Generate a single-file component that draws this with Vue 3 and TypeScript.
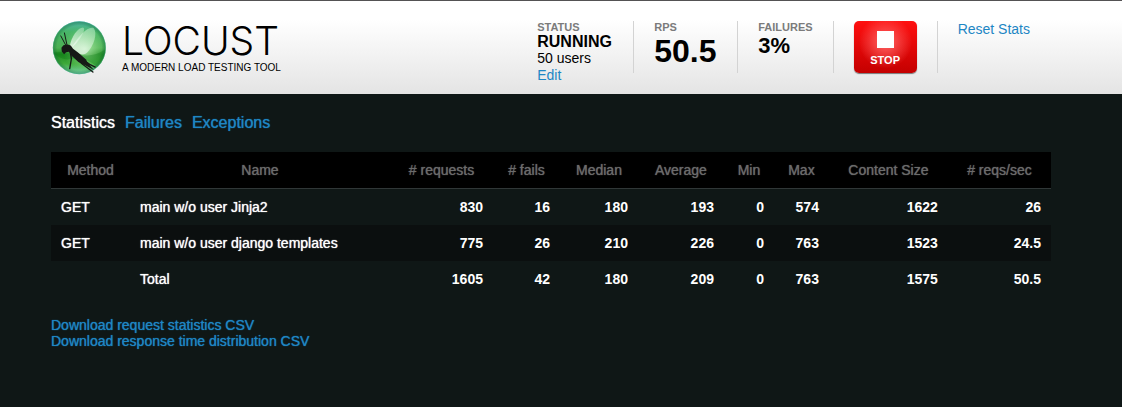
<script setup lang="ts">
interface StatRow {
  method: string
  name: string
  values: (number | string)[]
}

const tabs: string[] = ['Statistics', 'Failures', 'Exceptions']
const columns: string[] = ['Method', 'Name', '# requests', '# fails', 'Median', 'Average', 'Min', 'Max', 'Content Size', '# reqs/sec']
const columnKeys: string[] = ['method', 'name', 'requests', 'fails', 'median', 'average', 'min', 'max', 'size', 'rate']
const rows: StatRow[] = [
  { method: 'GET', name: 'main w/o user Jinja2', values: [830, 16, 180, 193, 0, 574, 1622, 26] },
  { method: 'GET', name: 'main w/o user django templates', values: [775, 26, 210, 226, 0, 763, 1523, 24.5] },
  { method: '', name: 'Total', values: [1605, 42, 180, 209, 0, 763, 1575, 50.5] },
]
const downloads: string[] = ['Download request statistics CSV', 'Download response time distribution CSV']
</script>

<template>
  <div class="page">
    <header class="top">
      <div class="brand">
        <svg class="emblem" viewBox="20 20 163 163" aria-hidden="true">
          <defs>
            <linearGradient id="orb" x1="0" y1="0" x2="0" y2="1">
              <stop offset="0" stop-color="#4db4a5" />
              <stop offset="0.2" stop-color="#48b568" />
              <stop offset="0.5" stop-color="#4cb052" />
              <stop offset="0.62" stop-color="#1f8a22" />
              <stop offset="0.8" stop-color="#3faa3a" />
              <stop offset="1" stop-color="#7ed6b4" />
            </linearGradient>
            <radialGradient id="glow" cx="0.6" cy="0.52" r="0.42">
              <stop offset="0" stop-color="#d8ffd4" stop-opacity="0.75" />
              <stop offset="0.5" stop-color="#a2e69a" stop-opacity="0.45" />
              <stop offset="1" stop-color="#7ad07a" stop-opacity="0" />
            </radialGradient>
            <radialGradient id="edge">
              <stop offset="0.84" stop-color="#0b5a2e" stop-opacity="0" />
              <stop offset="0.96" stop-color="#17713f" stop-opacity="0.4" />
              <stop offset="1" stop-color="#4fb0a0" stop-opacity="0.7" />
            </radialGradient>
            <linearGradient id="wing" x1="0.8" y1="0" x2="0.1" y2="1">
              <stop offset="0" stop-color="#c5efcc" stop-opacity="0.5" />
              <stop offset="1" stop-color="#ffffff" stop-opacity="0.75" />
            </linearGradient>
          </defs>
          <circle cx="101" cy="101" r="80" fill="url(#orb)" />
          <circle cx="101" cy="101" r="80" fill="url(#glow)" />
          <path d="M22 115Q60 111 101 121T180 105Q177 135 154 158Q118 125 65 136Q38 134 22 115Z" fill="#08760f" opacity="0.3" />
          <circle cx="101" cy="101" r="80" fill="url(#edge)" />
          <path d="M72 98C76 67 98 39 113 40C123 45 100 82 77 101Z" fill="url(#wing)" />
          <path d="M76 103C99 63 127 35 144 41C157 55 145 96 124 116C111 127 95 118 76 103Z" fill="url(#wing)" />
          <g fill="none" stroke="#161916" stroke-linecap="round">
            <path d="M61 95L45 65M64 94L56 56" stroke-width="3" />
            <path d="M73 111L77 134L72 164M75 112L77 134" stroke-width="4" />
            <path d="M86 126L108 148L142 174M101 128L132 151L149 159" stroke-width="4" />
          </g>
          <path d="M47 101L53 93L66 91L75 94L82 104L97 115L122 137L124 144L145 168L117 153L98 144L77 124L70 113L61 114L55 120L48 112Z" fill="#161916" />
        </svg>
        <div class="wordmark">
          <h1>LOCUST</h1>
          <p>A MODERN LOAD TESTING TOOL</p>
        </div>
      </div>
      <div class="boxes">
        <div class="box status">
          <div class="label">STATUS</div>
          <div class="state">RUNNING</div>
          <div class="users">50 users</div>
          <a href="#">Edit</a>
        </div>
        <div class="box">
          <div class="label">RPS</div>
          <div class="rps">50.5</div>
        </div>
        <div class="box">
          <div class="label">FAILURES</div>
          <div class="ratio">3%</div>
        </div>
        <div class="box">
          <button class="stop" type="button"><span class="square"></span>STOP</button>
        </div>
        <div class="box"><a href="#">Reset Stats</a></div>
      </div>
    </header>

    <main>
      <nav>
        <a v-for="(tab, i) in tabs" :key="tab" href="#" :class="{ current: i === 0 }">{{ tab }}</a>
      </nav>
      <table>
        <colgroup>
          <col v-for="key in columnKeys" :key="key" :class="'col-' + key">
        </colgroup>
        <thead>
          <tr><th v-for="column in columns" :key="column" scope="col">{{ column }}</th></tr>
        </thead>
        <tbody>
          <tr v-for="row in rows" :key="row.name">
            <td>{{ row.method }}</td>
            <td>{{ row.name }}</td>
            <td v-for="(value, i) in row.values" :key="i" class="number">{{ value }}</td>
          </tr>
        </tbody>
      </table>
      <div class="downloads">
        <a v-for="item in downloads" :key="item" href="#">{{ item }}</a>
      </div>
    </main>
  </div>
</template>

<style>
body {
  margin: 0;
  background: #0f1716;
}
</style>

<style scoped>
.page {
  min-height: 100vh;
  box-sizing: border-box;
  font: 14px/16px "Liberation Sans", Arial, sans-serif;
  color: #fff;
}
a {
  color: #1e86c4;
  text-decoration: none;
}
.top {
  display: flex;
  justify-content: space-between;
  box-sizing: border-box;
  min-height: 94px;
  padding: 20px 92px 0 52px;
  border-top: 1px solid #545254;
  background: linear-gradient(#fff 20%, #e4e4e4);
  color: #000;
}
.brand {
  display: flex;
  gap: 15px;
}
.emblem {
  width: 55px;
  height: 54px;
}
h1 {
  margin: 0;
  font: 300 39px/40px Inter, Lato, sans-serif;
}
.wordmark p {
  margin: 1px 0 0;
  font-size: 10px;
  line-height: 12px;
}
.boxes {
  display: flex;
  align-items: flex-start;
}
.box {
  height: 52px;
  padding: 0 20px;
  border-right: 1px solid #d3d3d3;
}
.box:last-child {
  padding-right: 0;
  border-right: 0;
}
.label {
  font-size: 11px;
  line-height: 13px;
  font-weight: bold;
  color: #7b7b7b;
}
.state {
  min-width: 76px;
  font-size: 16px;
  font-weight: bold;
}
.users {
  line-height: 17px;
}
.rps {
  min-width: 63px;
  font-size: 32px;
  line-height: 34px;
  font-weight: bold;
}
.ratio {
  font-size: 22px;
  line-height: 24px;
  font-weight: bold;
}
.stop {
  display: flex;
  flex-direction: column;
  align-items: center;
  gap: 5px;
  width: 63px;
  height: 52px;
  padding: 10px 0 0;
  border: 0;
  border-radius: 5px;
  background: radial-gradient(circle at 50% 40%, #ff6666, transparent 60%), linear-gradient(#ff1010, #c40000);
  box-shadow: 0 1px 1px #777;
  color: #fff;
  font: bold 11px/14px "Liberation Sans", Arial, sans-serif;
}
.square {
  width: 17px;
  height: 17px;
  background: #fff;
}
main {
  padding: 19px 71px 40px 51px;
}
nav {
  display: flex;
  gap: 10px;
  font-size: 16px;
  line-height: 20px;
}
nav .current {
  color: #fff;
}
nav,
table,
.downloads {
  text-shadow: 0 0 1px;
}
table {
  width: 100%;
  margin: 19px 0 20px;
  table-layout: fixed;
  border-collapse: separate;
  border-spacing: 0;
}
th,
td {
  height: 36px;
  padding: 0 10px;
  box-sizing: border-box;
  text-align: left;
  white-space: nowrap;
}
th {
  height: 37px;
  padding: 0;
  background: #000;
  border-bottom: 1px solid #303737;
  color: #6b6b6b;
  font-weight: normal;
  text-align: center;
}
tbody tr:nth-child(even) {
  background: #0b0f0f;
}
td.number {
  text-align: right;
  font-weight: bold;
  text-shadow: none;
}
.col-method { width: 7.9%; }
.col-name { width: 26%; }
.col-requests { width: 10.3%; }
.col-fails { width: 6.7%; }
.col-median { width: 7.8%; }
.col-average { width: 8.6%; }
.col-min { width: 5%; }
.col-max { width: 5.5%; }
.col-size { width: 11.9%; }
.col-rate { width: 10.3%; }
.downloads {
  display: flex;
  flex-direction: column;
  align-items: flex-start;
}
</style>
